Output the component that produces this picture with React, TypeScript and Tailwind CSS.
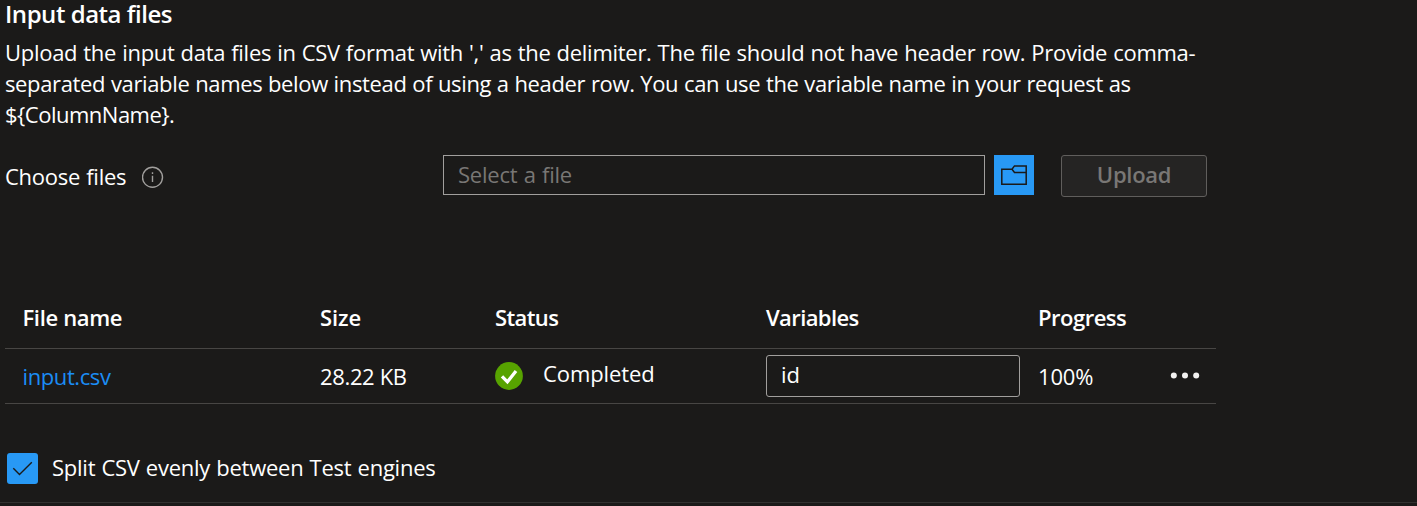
import React from "react";

function InfoIcon() {
  return (
    <svg className="h-[22px] w-[22px]" viewBox="0 0 22 22" fill="none" stroke="#a19f9d">
      <circle cx="10.5" cy="11.3" r="10" strokeWidth="1.4" />
      <path d="M10.5 9.7V16M10.5 6.2V8" strokeWidth="1.4" />
    </svg>
  );
}

function FolderIcon() {
  return (
    <svg className="h-[20px] w-[26px]" viewBox="0 0 26 20" fill="none" stroke="#1b1a19" strokeWidth="1.5">
      <path d="M.8 4.3H11L13.5 .9H25.2V19.2H.8V4.3ZM11 4.3L13.5 7.5H25.2" />
    </svg>
  );
}

function StatusIcon() {
  return (
    <svg className="h-[28px] w-[28px]" viewBox="0 0 28 28" fill="none">
      <circle cx="14" cy="14" r="13.9" fill="#57a300" />
      <path d="M7 14.3L12.4 19.8L21 9" stroke="#fff" strokeWidth="3.3" />
    </svg>
  );
}

export default function App() {
  return (
    <main className="flex h-[506px] w-full flex-col overflow-hidden bg-[#1b1a19] font-['Open_Sans','Noto_Sans',sans-serif] text-[22px] leading-[31px] whitespace-nowrap text-white">
      <h2 className="ml-[5px] h-[37px] text-[24px] leading-[27px] font-semibold tracking-[-0.47px]">Input data files</h2>
      <div className="ml-[5px] h-[93px]">
        <div className="tracking-[-0.28px] [word-spacing:0.57px]">Upload the input data files in CSV format with ',' as the delimiter. The file should not have header row. Provide comma-</div>
        <div className="tracking-[-0.36px] [word-spacing:0.4px]">separated variable names below instead of using a header row. You can use the variable name in your request as</div>
        <div className="tracking-[-0.5px]">{"${ColumnName}."}</div>
      </div>
      <div className="mt-[25px] ml-[5px] flex h-[42px] items-start">
        <div className="flex w-[438px] items-center pt-[6px]">
          <span className="w-[137px] tracking-[-0.25px] [word-spacing:0.6px]">Choose files</span>
          <InfoIcon />
        </div>
        <div className="flex h-[40px] w-[542px] items-center border border-[#a19f9d] pb-[2px] pl-[14px] text-[#797775]">
          <span className="tracking-[-0.2px] [word-spacing:0.7px]">Select a file</span>
        </div>
        <button aria-label="Browse" className="ml-[9px] flex h-[40px] w-[40px] items-center justify-center bg-[#2899f5]">
          <FolderIcon />
        </button>
        <button className="ml-[27px] h-[42px] w-[146px] rounded-[3px] border border-[#605e5c] bg-[#252423] pb-[3px] font-semibold tracking-[-0.3px] text-[#797775]">
          Upload
        </button>
      </div>
      <section className="mt-[91px] ml-[5px] w-[1211px]">
        <div className="grid h-[61px] grid-cols-[297px_175px_271px_272px_1fr] items-center border-b border-[#484644] pb-[2px] pl-[18px] font-semibold">
          <span className="-ml-[0.5px] tracking-[-0.35px]">File name</span>
          <span className="tracking-[-0.1px]">Size</span>
          <span className="tracking-[-0.6px]">Status</span>
          <span className="tracking-[-0.6px]">Variables</span>
          <span className="tracking-[-0.5px]">Progress</span>
        </div>
        <div className="grid h-[55px] grid-cols-[297px_175px_271px_272px_132px_1fr] items-center border-b border-[#484644] pl-[18px]">
          <span className="-ml-[0.5px] tracking-[-0.4px] text-[#1b8df5]">input.csv</span>
          <span className="tracking-[-0.35px]">28.22 KB</span>
          <span className="flex items-center">
            <StatusIcon />
            <span className="ml-[20px] pb-[5px] tracking-[-0.1px]">Completed</span>
          </span>
          <span className="flex h-[42px] w-[254px] items-center rounded-[3px] border border-[#a19f9d] pb-[3px] pl-[14px]">id</span>
          <span className="tracking-[-0.2px]">100%</span>
          <svg className="h-[8px] w-[30px]" viewBox="0 0 30 8" fill="#f3f2f1">
            <circle cx="3.8" cy="3.4" r="3" />
            <circle cx="15" cy="3.4" r="3" />
            <circle cx="26.2" cy="3.4" r="3" />
          </svg>
        </div>
      </section>
      <div className="mt-[49px] ml-[7px] flex h-[31px] items-center">
        <span className="flex h-[31px] w-[31px] items-center justify-center rounded-[3px] bg-[#2899f5]">
          <svg className="h-[31px] w-[31px]" viewBox="0 0 31 31" fill="none" stroke="#1b1a19" strokeWidth="1.4">
            <path d="M6.3 15.2L12.5 21.5L24.8 9.2" />
          </svg>
        </span>
        <span className="ml-[14px] pb-[2px] tracking-[-0.25px] [word-spacing:0.7px]">Split CSV evenly between Test engines</span>
      </div>
      <div className="mt-[18px] h-px shrink-0 bg-[#323130]" />
    </main>
  );
}
